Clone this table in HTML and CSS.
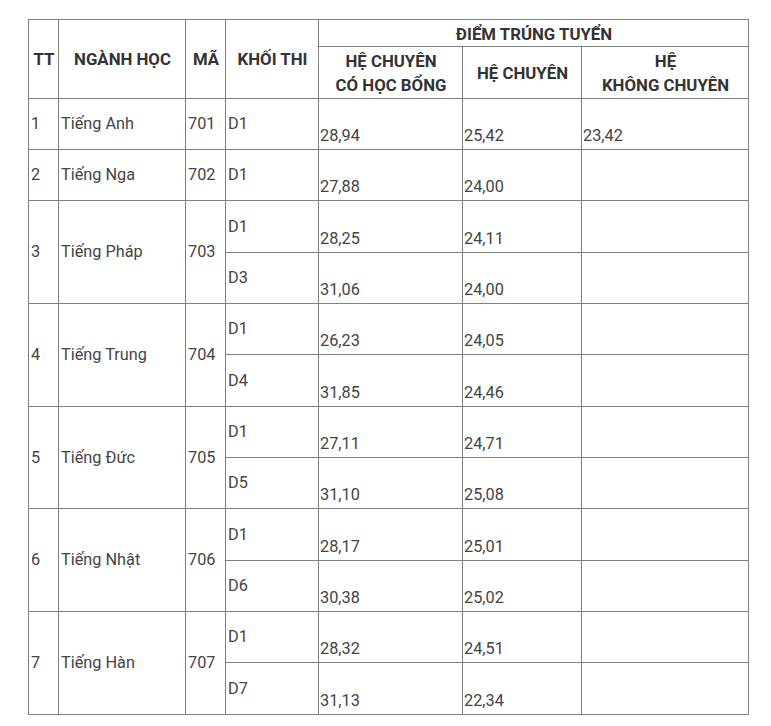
FILE: index.html
```html
<!DOCTYPE html>
<html lang="vi">
<head>
<meta charset="utf-8">
<title>Điểm trúng tuyển</title>
<link rel="stylesheet" href="styles.css">
</head>
<body>
<table class="scores">
  <colgroup>
    <col class="c-tt"><col class="c-nganh"><col class="c-ma"><col class="c-khoi"><col class="c-hb"><col class="c-hc"><col class="c-kc">
  </colgroup>
  <thead>
    <tr>
      <th rowspan="2">TT</th>
      <th rowspan="2">NGÀNH HỌC</th>
      <th rowspan="2">MÃ</th>
      <th rowspan="2">KHỐI THI</th>
      <th colspan="3">ĐIỂM TRÚNG TUYỂN</th>
    </tr>
    <tr>
      <th>HỆ CHUYÊN<br>CÓ HỌC BỔNG</th>
      <th>HỆ CHUYÊN</th>
      <th>HỆ<br>KHÔNG CHUYÊN</th>
    </tr>
  </thead>
  <tbody>
    <tr><td>1</td><td>Tiếng Anh</td><td>701</td><td>D1</td><td class="score">28,94</td><td class="score">25,42</td><td class="score">23,42</td></tr>
    <tr><td>2</td><td>Tiếng Nga</td><td>702</td><td>D1</td><td class="score">27,88</td><td class="score">24,00</td><td class="score"></td></tr>
    <tr><td rowspan="2">3</td><td rowspan="2">Tiếng Pháp</td><td rowspan="2">703</td><td>D1</td><td class="score">28,25</td><td class="score">24,11</td><td class="score"></td></tr>
    <tr><td>D3</td><td class="score">31,06</td><td class="score">24,00</td><td class="score"></td></tr>
    <tr><td rowspan="2">4</td><td rowspan="2">Tiếng Trung</td><td rowspan="2">704</td><td>D1</td><td class="score">26,23</td><td class="score">24,05</td><td class="score"></td></tr>
    <tr><td>D4</td><td class="score">31,85</td><td class="score">24,46</td><td class="score"></td></tr>
    <tr><td rowspan="2">5</td><td rowspan="2">Tiếng Đức</td><td rowspan="2">705</td><td>D1</td><td class="score">27,11</td><td class="score">24,71</td><td class="score"></td></tr>
    <tr><td>D5</td><td class="score">31,10</td><td class="score">25,08</td><td class="score"></td></tr>
    <tr><td rowspan="2">6</td><td rowspan="2">Tiếng Nhật</td><td rowspan="2">706</td><td>D1</td><td class="score">28,17</td><td class="score">25,01</td><td class="score"></td></tr>
    <tr><td>D6</td><td class="score">30,38</td><td class="score">25,02</td><td class="score"></td></tr>
    <tr><td rowspan="2">7</td><td rowspan="2">Tiếng Hàn</td><td rowspan="2">707</td><td>D1</td><td class="score">28,32</td><td class="score">24,51</td><td class="score"></td></tr>
    <tr><td>D7</td><td class="score">31,13</td><td class="score">22,34</td><td class="score"></td></tr>
  </tbody>
</table>
</body>
</html>
```

FILE: styles.css
```css
html, body {
  margin: 0;
  padding: 0;
  background: #ffffff;
}

body {
  font-family: Roboto, "Liberation Sans", Arial, sans-serif;
  font-size: 16.3px;
  color: #444444;
}

.scores {
  border-collapse: collapse;
  table-layout: fixed;
  width: 720px;
  margin: 19px 0 0 28px;
}

.c-tt { width: 30px; }
.c-nganh { width: 127px; }
.c-ma { width: 40px; }
.c-khoi { width: 93px; }
.c-hb { width: 144px; }
.c-hc { width: 119px; }
.c-kc { width: 167px; }

.scores th,
.scores td {
  border: 1px solid #808080;
  line-height: 24px;
  padding: 1.5px 1px 0.83px 2px;
  vertical-align: middle;
  white-space: nowrap;
}

.scores th {
  font-size: 16.8px;
  font-weight: 700;
  color: #333333;
  text-align: center;
}

.scores td {
  text-align: left;
  font-weight: 400;
}

.scores td.score {
  padding-top: 25.5px;
  padding-left: 1px;
  vertical-align: bottom;
}
```
